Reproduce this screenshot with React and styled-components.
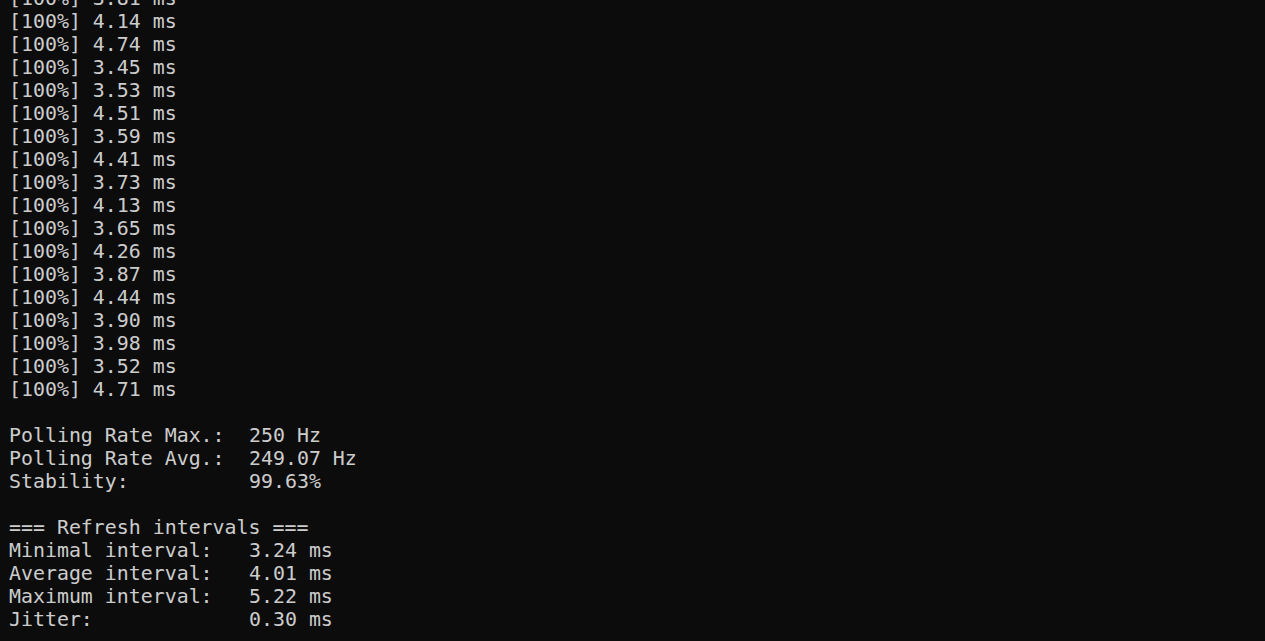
import React from "react";
import styled, { createGlobalStyle } from "styled-components";

const Global = createGlobalStyle`
    html, body {
        margin: 0;
        padding: 0;
        background: #0c0c0c;
        overflow: hidden;
    }
`;

const Screen = styled.div`
    height: 641px;
    width: 1265px;
    background: #0c0c0c;
    color: #cccccc;
    font-family: "DejaVu Sans Mono", "Liberation Mono", monospace;
    font-size: 19.9px;
    display: flex;
    flex-direction: column;
    justify-content: flex-end;
    padding: 0 0 10px 9px;
    box-sizing: border-box;
    overflow: hidden;
`;

const Line = styled.div`
    height: 23px;
    line-height: 23px;
    white-space: pre;
    flex-shrink: 0;
`;

const Label = styled.span`
    display: inline-block;
    width: ${(p) => p.cols * 12}px;
`;

const samples = [
    "3.81", "4.14", "4.74", "3.45", "3.53", "4.51", "3.59", "4.41", "3.73",
    "4.13", "3.65", "4.26", "3.87", "4.44", "3.90", "3.98", "3.52", "4.71",
];

const polling = [
    ["Polling Rate Max.:", "250 Hz"],
    ["Polling Rate Avg.:", "249.07 Hz"],
    ["Stability:", "99.63%"],
];

const intervals = [
    ["Minimal interval:", "3.24 ms"],
    ["Average interval:", "4.01 ms"],
    ["Maximum interval:", "5.22 ms"],
    ["Jitter:", "0.30 ms"],
];

function Stat({ label, value }) {
    return (
        <Line>
            <Label cols={20}>{label}</Label>
            {value}
        </Line>
    );
}

export default function App() {
    return (
        <>
            <Global />
            <Screen>
                {samples.map((s, i) => (
                    <Line key={i}>[100%] {s} ms</Line>
                ))}
                <Line> </Line>
                {polling.map(([l, v]) => (
                    <Stat key={l} label={l} value={v} />
                ))}
                <Line> </Line>
                <Line>=== Refresh intervals ===</Line>
                {intervals.map(([l, v]) => (
                    <Stat key={l} label={l} value={v} />
                ))}
            </Screen>
        </>
    );
}
